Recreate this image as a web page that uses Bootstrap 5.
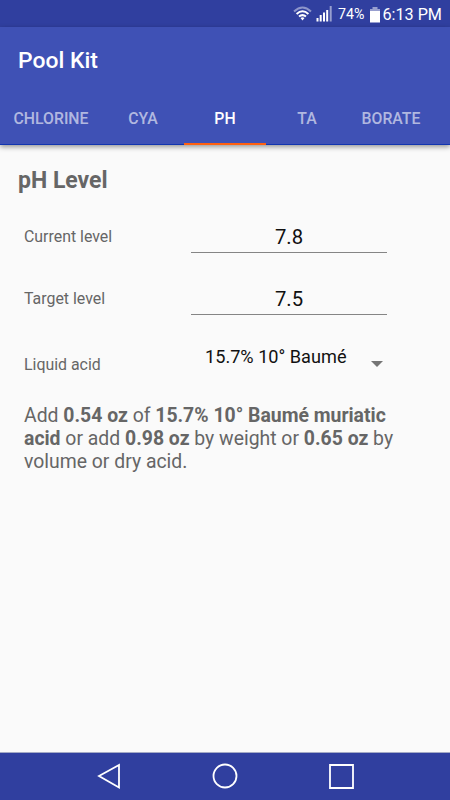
<!DOCTYPE html>
<html lang="en">
<head>
<meta charset="utf-8">
<meta name="viewport" content="width=device-width, initial-scale=1">
<title>Pool Kit</title>
<link href="https://cdn.jsdelivr.net/npm/bootstrap@5.3.0/dist/css/bootstrap.min.css" rel="stylesheet">
<style>
body{font-family:Roboto,"Liberation Sans",sans-serif;background:#fafafa;color:#666;width:450px;height:800px}
.status{height:27px;background:#303f9f;color:#fff;padding-right:8px;font-size:16.2px;line-height:27px}
.status .clock{padding-top:1px}
.status .pct{font-size:14.2px;margin:2px 5px 0 5px}
.appbar{height:118px;background:#3f51b5;box-shadow:0 2px 5px rgba(0,0,0,.4)}
.apptitle{height:66px;padding-left:18px;font-size:22.9px;font-weight:500;line-height:67px}
.tabs{height:52px;border-bottom:1px solid #1235b0}
.tabs .nav-link{width:82px;height:52px;padding:0;text-align:center;color:rgba(255,255,255,.6);font-size:15.8px;font-weight:500;line-height:51px}
.tabs .nav-link:hover{color:#fff}
.tabs .first{width:102px}
.tabs .last{width:86px}
.tabs .nav-link.active{color:#fff;border-bottom:2px solid #ff6010}
.heading{font-size:23px;font-weight:700;line-height:28px;margin:22px 0 0 18px}
.line{height:62px;padding-left:24px}
.line label{width:167px;font-size:15.9px;padding-bottom:2px}
.field{width:196px;height:32px;padding:0;border:0;border-bottom:1px solid #858585;border-radius:0;background:none;text-align:center;font-size:20.3px;line-height:31px;color:#111;margin-bottom:2px}
.picker{width:196px;height:40px;padding:0 4px 0 14px;font-size:18.15px;line-height:25px;color:#111;margin-bottom:4px}
.result{font-size:19.4px;line-height:23px;margin:7px 0 0 24px;width:390px}
.softkeys{height:48px;background:#303f9f;border-top:1px solid #a4aac6}
</style>
</head>
<body class="d-flex flex-column overflow-hidden">
<div class="status d-flex justify-content-end align-items-center flex-shrink-0">
  <svg width="40" height="20" viewBox="294 4 40 20" fill="none">
    <g stroke="#fff" stroke-width="2">
      <path d="M295 11.5Q303.5 3.5 312 11.5" opacity=".45"/>
      <path d="M297.6 14Q303.5 8.600 309.400 14"/>
      <path d="M300 16.600Q303.500 13.600 307 16.600"/>
    </g>
    <path d="M301.500 18Q303.500 16.500 305.500 18L303.500 20.500Z" fill="#fff"/>
    <path d="M317.500 18h2v3.500h-2zM320.700 15h2v6.500h-2zM324 12.500h2v9h-2zM327.200 10h2v11.500h-2z" fill="#fff"/>
    <path d="M330.700 6h2v15.500h-2z" fill="#fff" opacity=".5"/>
  </svg>
  <span class="pct">74%</span>
  <svg width="13" height="18" viewBox="0 0 13 18"><path d="M3.500 2h5v2h2.500v3h-10V4H3.500z" fill="#fff" opacity=".5"/><path d="M1 6h10v11.500h-10z" fill="#fff"/></svg>
  <span class="clock ms-0">6:13 PM</span>
</div>
<header class="appbar flex-shrink-0 text-white">
  <div class="apptitle">Pool Kit</div>
  <nav class="tabs nav flex-nowrap">
    <a class="nav-link first" href="#">CHLORINE</a>
    <a class="nav-link" href="#">CYA</a>
    <a class="nav-link active" href="#">PH</a>
    <a class="nav-link" href="#">TA</a>
    <a class="nav-link last" href="#">BORATE</a>
  </nav>
</header>
<main class="flex-grow-1">
  <h1 class="heading">pH Level</h1>
  <div class="line d-flex align-items-center mt-3 pb-2">
    <label for="cur">Current level</label>
    <input id="cur" class="field form-control" value="7.8">
  </div>
  <div class="line d-flex align-items-center pb-2">
    <label for="tgt">Target level</label>
    <input id="tgt" class="field form-control" value="7.5">
  </div>
  <div class="line d-flex align-items-center">
    <label>Liquid acid</label>
    <div class="picker d-flex justify-content-between">
      <span>15.7% 10° Baumé</span>
      <svg class="align-self-center" width="12" height="6" viewBox="0 0 12 6"><path d="M0 0h12L6 6z" fill="#757575"/></svg>
    </div>
  </div>
  <p class="result">Add <b>0.54 oz</b> of <b>15.7% 10° Baumé muriatic acid</b> or add <b>0.98 oz</b> by weight or <b>0.65 oz</b> by volume or dry acid.</p>
</main>
<footer class="softkeys flex-shrink-0">
  <svg class="d-block" width="450" height="47" viewBox="0 753 450 47" fill="none" stroke="#fff" stroke-width="1.800">
    <path d="M99 776L119 765V787.500Z"/>
    <circle cx="225" cy="776" r="11.500"/>
    <path d="M330 765h23v23h-23z"/>
  </svg>
</footer>
<script src="https://cdn.jsdelivr.net/npm/bootstrap@5.3.0/dist/js/bootstrap.bundle.min.js"></script>
</body>
</html>
